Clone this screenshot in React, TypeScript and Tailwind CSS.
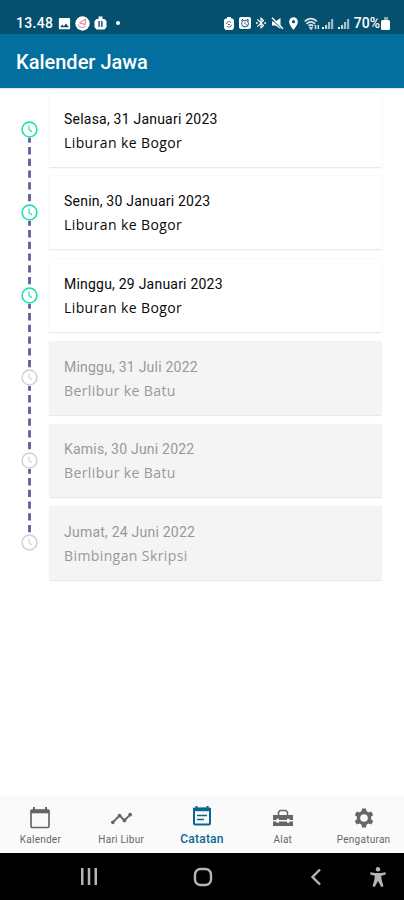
import type { ReactNode } from "react";
import { clsx } from "clsx";
import { MdAlarm, MdBluetoothConnected, MdImage, MdLocationOn, MdTimeline } from "react-icons/md";

type Note = {
  date: string;
  title: string;
  upcoming: boolean;
};

const notes: Note[] = [
  { date: "Selasa, 31 Januari 2023", title: "Liburan ke Bogor", upcoming: true },
  { date: "Senin, 30 Januari 2023", title: "Liburan ke Bogor", upcoming: true },
  { date: "Minggu, 29 Januari 2023", title: "Liburan ke Bogor", upcoming: true },
  { date: "Minggu, 31 Juli 2022", title: "Berlibur ke Batu", upcoming: false },
  { date: "Kamis, 30 Juni 2022", title: "Berlibur ke Batu", upcoming: false },
  { date: "Jumat, 24 Juni 2022", title: "Bimbingan Skripsi", upcoming: false },
];

const gearTeeth = [0, 60, 120, 180, 240, 300];

function SignalIcon() {
  return (
    <svg width="12" height="13" viewBox="0 0 12 13" fill="#fff">
      <rect x="0" y="10" width="2" height="2" />
      <rect x="3" y="8" width="2.2" height="4" opacity=".75" />
      <rect x="6" y="5" width="2.2" height="7" opacity=".65" />
      <rect x="9" y="2" width="2.2" height="10" opacity=".6" />
    </svg>
  );
}

function StatusBar() {
  return (
    <div className="flex h-[34px] items-start bg-[#05506f] pr-[13px] pl-4 pt-[15px] text-white">
      <div className="flex h-4 items-center">
        <span className="w-[41px] text-[14px] font-medium tracking-[0.3px]">13.48</span>
        <MdImage className="size-[15px]" />
        <svg className="ml-[3px]" width="15" height="15" viewBox="0 0 15 15">
          <circle cx="7.5" cy="7.5" r="7.2" fill="#fff" />
          <path
            d="M10.5 3 4.500 6.800 10 8.500zM3 8.500c1 3.500 6 4 7.500 1"
            fill="none"
            stroke="#d8687c"
            strokeWidth=".9"
          />
        </svg>
        <svg className="ml-[4px]" width="13" height="14" viewBox="0 0 13 14" fill="#fff">
          <path d="M4.5 3V.5h4V3h2l2 2v6l-2 2.5h-8L.5 11V5l2-2z" />
          <path d="M4.4 5h4.2v6H4.4z" fill="#05506f" />
          <path d="M5.8 5h1.4v6H5.8z" />
        </svg>
        <span className="ml-[9px] size-1 rounded-full bg-white" />
      </div>
      <div className="ml-auto flex h-4 items-center">
        <svg width="10" height="13" viewBox="0 0 10 13">
          <path d="M3 0h4v1.5h1.5L10 3v8l-1.5 2h-7L0 11V3l1.5-1.5H3z" fill="#fff" />
          <path
            d="M2.5 7a2.5 2.5 0 0 1 4.4-1.5M7.5 8a2.5 2.5 0 0 1-4.4 1.2M4 7.5h2"
            fill="none"
            stroke="#05506f"
            strokeWidth=".8"
          />
        </svg>
        <span className="ml-[5px] flex size-[12px] items-center justify-center rounded-[2px] bg-white text-[#05506f]">
          <MdAlarm className="size-[10px]" />
        </span>
        <MdBluetoothConnected className="ml-[3px] size-[14px]" />
        <svg className="ml-[3px]" width="13" height="13" viewBox="0 0 13 13" fill="#fff">
          <path d="M1 4.5h3.5L9.5 1v11l-5-3.500H1z" />
          <path d="m0 1.5 12 11" stroke="#05506f" strokeWidth="1.2" />
          <path d="m1 .8 11 11" stroke="#fff" strokeWidth="1.5" />
        </svg>
        <MdLocationOn className="ml-[2px] size-[15px]" />
        <svg className="ml-[3px]" width="16" height="13" viewBox="0 0 16 13" fill="none" stroke="#fff">
          <path
            d="M.7 4.5c3.5-3.8 8.8-3.8 12.3 0M2.5 6.8c2.5-2.7 6-2.7 8.5 0M4.5 9c1.5-1.6 3.3-1.6 4.8 0"
            strokeWidth="1.7"
            opacity=".85"
          />
          <path d="m5.500 10 1.500 2 1.500-2M11.500 8v4M14.300 8v4" strokeWidth="1.5" opacity=".85" />
        </svg>
        <span className="ml-[2px] flex gap-[4px]">
          <SignalIcon />
          <SignalIcon />
        </span>
        <span className="ml-[4px] text-[14px] font-medium">70%</span>
        <svg className="ml-[1px]" width="10" height="13" viewBox="0 0 10 13" fill="#fff">
          <path d="M3 0h4v3H3z" opacity=".5" />
          <rect y="3" width="9" height="10" rx="1.5" />
        </svg>
      </div>
    </div>
  );
}

function TimelineItem({ note, isLast }: { note: Note; isLast: boolean }) {
  return (
    <li className="flex h-[82.6px]">
      <div className="flex w-[49px] flex-col pl-[21px] pt-[28px]">
        <svg
          className={clsx("shrink-0", note.upcoming ? "text-[#22dfb0]" : "text-[#d3d3d3]")}
          width="17"
          height="17"
          viewBox="0 0 17 17"
          fill="none"
          stroke="currentColor"
        >
          <circle cx="8.5" cy="8.5" r="7.4" strokeWidth="1.6" />
          <path d="M8 4.5v4.3l3 2" strokeWidth="1.2" />
        </svg>
        {!isLast && (
          <svg className="ml-[7px] shrink-0" width="3" height="65.6" viewBox="0 0 3 65.6">
            <path d="M1.5 0v65.6" stroke="#665b9b" strokeWidth="2.8" strokeDasharray="7.3 4.4" strokeDashoffset="2.6" />
          </svg>
        )}
      </div>
      <div
        className={clsx(
          "h-[73.5px] w-[333px] rounded-[1px] pl-[15px] pt-[13.4px]",
          note.upcoming
            ? "bg-white text-[#080808] shadow-[0_0.5px_1.5px_rgba(0,0,0,0.1)]"
            : "bg-[#f4f4f4] text-[#999] shadow-[0_0.5px_1px_rgba(0,0,0,0.1)]",
        )}
      >
        <p className="text-[14px] leading-6 tracking-[0.22px]">{note.date}</p>
        <p className="font-['Open_Sans',sans-serif] text-[14px] leading-6 font-medium tracking-[0.4px]">{note.title}</p>
      </div>
    </li>
  );
}

function NavItem({ label, active, children }: { label: string; active?: boolean; children: ReactNode }) {
  return (
    <div className={clsx("flex flex-1 flex-col items-center", active ? "pt-[9px] text-[#086691]" : "pt-[11px] text-[#666]")}>
      {children}
      <span
        className={clsx(
          "whitespace-nowrap",
          active
            ? "mt-[4px] text-[12px] leading-4 font-medium tracking-[0.2px]"
            : "mt-[3px] text-[10px] leading-4 tracking-[0.25px]",
        )}
      >
        {label}
      </span>
    </div>
  );
}

function BottomNav() {
  return (
    <nav className="flex h-[57px] bg-[#fafafa]">
      <NavItem label="Kalender">
        <svg width="22" height="22" viewBox="0 0 22 22" fill="none" stroke="currentColor">
          <rect x="2" y="3" width="18" height="17.5" rx="1.5" strokeWidth="1.7" />
          <path d="M1.5 4.5h19" strokeWidth="3.6" />
          <path d="M5 0v4M17 0v4" strokeWidth="2" />
        </svg>
      </NavItem>
      <NavItem label="Hari Libur">
        <MdTimeline className="size-[23px] -mb-px" />
      </NavItem>
      <NavItem label="Catatan" active>
        <svg width="20" height="22" viewBox="0 0 20 22" fill="none" stroke="currentColor">
          <rect x="2" y="3.5" width="16" height="16" rx="1.5" strokeWidth="2" />
          <path d="M1 4.5h18" strokeWidth="3.4" />
          <path d="M4.5 1v4M15.5 1v4" strokeWidth="2" />
          <path d="M5 10.500h10M5 14.500h7" strokeWidth="1.6" />
        </svg>
      </NavItem>
      <NavItem label="Alat">
        <svg width="22" height="22" viewBox="0 0 22 22" fill="currentColor">
          <path d="M6.5 8V5.200L8 3.500h6l1.500 1.700V8" fill="none" stroke="currentColor" strokeWidth="1.5" />
          <path d="M1 8h20v5h-3.500v-1.300H15V13H7v-1.300H4.500V13H1z" />
          <path d="M1 14.500h3.500v1.300H7v-1.300h8v1.300h2.500v-1.300H21V19H1z" />
        </svg>
      </NavItem>
      <NavItem label="Pengaturan">
        <svg width="22" height="22" viewBox="0 0 22 22" fill="currentColor">
          <circle cx="11" cy="11" r="5.5" fill="none" stroke="currentColor" strokeWidth="3.4" />
          {gearTeeth.map((angle) => (
            <path key={angle} d="M9 1.500h4l.7 4H8.300z" transform={`rotate(${angle} 11 11)`} />
          ))}
        </svg>
      </NavItem>
    </nav>
  );
}

function SystemBar() {
  return (
    <div className="flex h-[47px] items-center bg-black text-[#b5b5b5]">
      <div className="flex w-[178px] justify-center">
        <svg width="18" height="17" viewBox="0 0 18 17" fill="currentColor">
          <path d="M1 0h2.5v17H1zM7.75 0h2.5v17h-2.5zM14.5 0H17v17h-2.5z" />
        </svg>
      </div>
      <div className="flex w-[49px] justify-center">
        <svg width="20" height="20" viewBox="0 0 20 20" fill="none" stroke="currentColor" strokeWidth="2.4">
          <rect x="2" y="2" width="16" height="16" rx="5.5" />
        </svg>
      </div>
      <div className="flex w-[177px] justify-center">
        <svg width="12" height="18" viewBox="0 0 12 18" fill="none" stroke="currentColor" strokeWidth="2.4">
          <path d="M10 1.5 2.5 9l7.5 7.5" />
        </svg>
      </div>
      <svg className="-ml-[34px] shrink-0" width="16" height="20" viewBox="0 0 16 20" fill="currentColor">
        <circle cx="8" cy="2.3" r="2.2" />
        <path d="M.5 5.2 5 6h6l4.5-.8.3 2.2-4.600 1.300.5 4.300 1.800 6.300-2.200.7L8 14l-3.300 6-2.200-.7L4.300 13l.5-4.300L.2 7.400z" />
      </svg>
    </div>
  );
}

export default function App() {
  return (
    <div className="flex h-[900px] w-[404px] flex-col overflow-hidden bg-white font-[Roboto,sans-serif]">
      <StatusBar />
      <header className="flex h-[54px] shrink-0 items-center bg-[#036f9e] pt-[2px] pl-4 shadow-[0_1px_1px_rgba(0,0,0,0.1)]">
        <h1 className="text-[20px] font-medium text-white">Kalender Jawa</h1>
      </header>
      <main className="flex-1 pt-[5.4px]">
        <ul>
          {notes.map((note, index) => (
            <TimelineItem key={note.date} note={note} isLast={index === notes.length - 1} />
          ))}
        </ul>
      </main>
      <BottomNav />
      <SystemBar />
    </div>
  );
}
